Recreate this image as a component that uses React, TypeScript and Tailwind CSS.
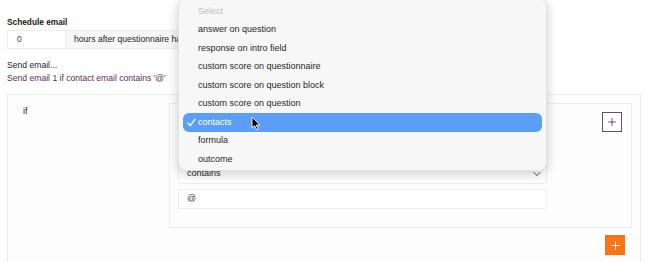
import { ChevronDown, Plus } from "lucide-react";

const options = [
  "answer on question",
  "response on intro field",
  "custom score on questionnaire",
  "custom score on question block",
  "custom score on question",
  "contacts",
  "formula",
  "outcome",
];

function Field({ children, chevron }: { children?: React.ReactNode; chevron?: boolean }) {
  return (
    <div className="flex h-[20px] items-center justify-between border border-[#eeeeee] bg-white pl-[8px] pr-[3px]">
      <span>{children}</span>
      {chevron && <ChevronDown size={12} strokeWidth={1.7} className="text-[#222]" />}
    </div>
  );
}

export default function App() {
  return (
    <div
      className="relative h-[262px] w-[650px] overflow-hidden bg-white pl-[7px] text-[9px] text-[#1f1f1f]"
      style={{ fontFamily: '"Liberation Sans", Arial, sans-serif' }}
    >
      <div className="pt-[16px] text-[8.3px] font-bold leading-[12px] text-[#1a1a1a]">Schedule email</div>
      <div className="mt-[2px] flex h-[19px] text-[8.6px]">
        <div className="flex w-[59px] items-center border border-[#eeeeee] pl-[9px] text-[#5a2e55]">0</div>
        <div className="flex w-[280px] items-center border border-l-0 border-[#eeeeee] bg-[#f6f6f6] pl-[8px]">
          hours after questionnaire has been completed
        </div>
      </div>
      <div className="mt-[9.5px] text-[8.6px] leading-[13px]">Send email...</div>
      <div className="text-[8.6px] leading-[13px] text-[#5a2e55]">Send email 1 if contact email contains '@'</div>

      <div className="mt-[9.5px] h-[200px] w-[634px] border border-[#ececec] bg-[#fdfdfd] pt-[8px]">
        <div className="flex">
          <div className="w-[161px] pl-[15px] pt-[2px] leading-[12px]">if</div>
          <div className="w-[463px] border border-[#ececec] bg-[#fdfdfd] pb-[18px] pl-[8px] pr-[9px] pt-[10px]">
            <div className="flex items-start justify-between">
              <div className="flex w-[369px] flex-col gap-[5px]">
                <Field chevron>contacts</Field>
                <Field chevron>email</Field>
                <Field chevron>contains</Field>
                <div className="flex h-[20px] items-center border border-[#eeeeee] bg-white pl-[8px] text-[#5a2e55]">@</div>
              </div>
              <div className="-mt-[2px] flex h-[20px] w-[20px] items-center justify-center border border-[#6b4a68] bg-white text-[#4a2a47]">
                <Plus size={12} strokeWidth={1.6} />
              </div>
            </div>
          </div>
        </div>
        <div className="mt-[7px] flex justify-end pr-[15px]">
          <div className="flex h-[20px] w-[20px] items-center justify-center bg-[#fb7317] text-white">
            <Plus size={13} strokeWidth={1.8} />
          </div>
        </div>
      </div>

      {/* open select list */}
      <div className="absolute left-[178px] top-[-2px] w-[369px] rounded-[8px] border border-[#e2e2e2] bg-[#f7f7f7] px-[4px] pb-[1.5px] pt-[3px] shadow-[0_3px_12px_rgba(0,0,0,0.2)]">
        <div className="flex h-[18.5px] items-center pl-[15px] text-[#bdbdbd]">Select</div>
        {options.map((o) =>
          o === "contacts" ? (
            <div key={o} className="flex h-[18.5px] items-center rounded-[6px] bg-[#5a9ef8] pl-[4px] text-white">
              <svg width="9" height="9" viewBox="0 0 9 9" className="mr-[2px]">
                <path d="M1 5 L3.3 7.6 L8 1.2" fill="none" stroke="white" strokeWidth="1.3" strokeLinecap="round" strokeLinejoin="round" />
              </svg>
              {o}
            </div>
          ) : (
            <div key={o} className="flex h-[18.5px] items-center pl-[15px]">
              {o}
            </div>
          )
        )}
      </div>

      {/* mouse cursor */}
      <svg className="absolute left-[251px] top-[116px]" width="10" height="15" viewBox="0 0 10 15">
        <path d="M1 1 L1 12 L3.6 9.6 L5.6 13.8 L7.2 13.1 L5.3 9 L8.8 9 Z" fill="black" stroke="white" strokeWidth="0.9" strokeLinejoin="round" />
      </svg>
    </div>
  );
}
